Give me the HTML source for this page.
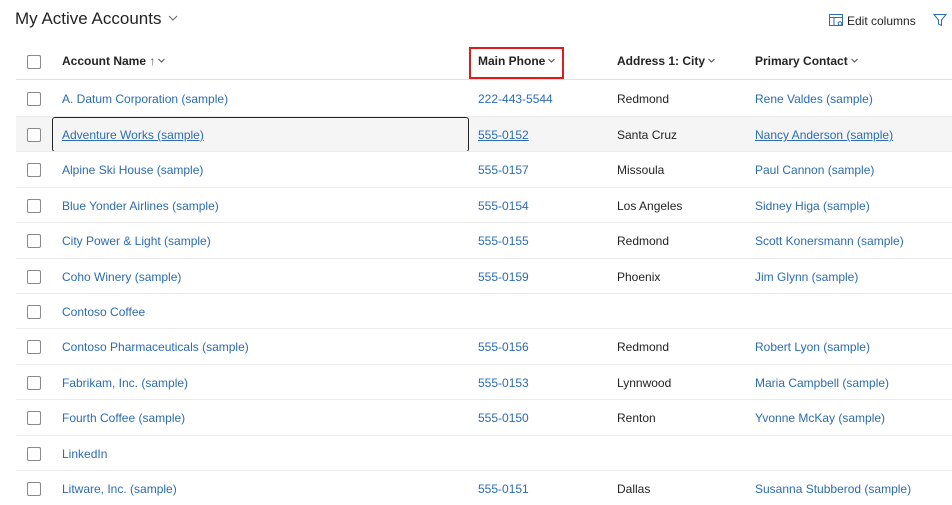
<!DOCTYPE html>
<html><head><meta charset="utf-8"><style>
*{margin:0;padding:0;box-sizing:border-box}
body{width:952px;height:502px;overflow:hidden;background:#fff;font-family:"Segoe UI","Liberation Sans",sans-serif;font-size:12px;color:#242424;position:relative}
.a{position:absolute;white-space:nowrap}
.title{left:15px;top:9px;font-size:17px;color:#242424}
.hdr{font-weight:bold;font-size:12px;color:#242424;top:54px}
.row{position:absolute;left:16px;width:936px;height:35px;border-top:1px solid #ebebeb}
.cb{position:absolute;left:11px;top:11px;width:14px;height:14px;border:1px solid #8a8a8a;border-radius:2px;background:#fff}
.c{position:absolute;top:11px;white-space:nowrap}
.l{color:#2b6cb3}
.u{text-decoration:underline}
.ch{display:inline-block;vertical-align:2px;margin-left:3px}
</style></head><body>
<div class="a title">My Active Accounts <svg class="ch" width="10" height="6" viewBox="0 0 10 6" style="margin-left:2px;vertical-align:3px"><path d="M1 1L5 5L9 1" fill="none" stroke="#666" stroke-width="1"/></svg></div>
<div class="a" style="left:829px;top:14px;color:#242424;font-size:12px">
<svg width="14" height="13" viewBox="0 0 14 13" style="vertical-align:-2px;margin-right:4px"><rect x="0.5" y="0.5" width="13" height="11" fill="none" stroke="#2b6cb3"/><line x1="0.5" y1="3.5" x2="13.5" y2="3.5" stroke="#2b6cb3"/><line x1="5" y1="3.5" x2="5" y2="11.5" stroke="#2b6cb3"/><circle cx="11" cy="9.5" r="1.8" fill="#fff" stroke="#2b6cb3"/></svg>Edit columns</div>
<svg class="a" style="left:933px;top:13px" width="14" height="14" viewBox="0 0 14 14"><path d="M1 1.5H13L8.5 7V12.5L5.5 11V7Z" fill="none" stroke="#2b6cb3"/></svg>
<div class="a" style="left:16px;top:44px;width:936px;height:36px;border-bottom:1px solid #e0e0e0"></div>
<div class="a" style="left:27px;top:55px;width:14px;height:14px;border:1px solid #8a8a8a;border-radius:2px"></div>
<div class="a hdr" style="left:62px">Account Name <span style="font-weight:normal;color:#555">↑</span><svg class="ch" width="7" height="5" viewBox="0 0 7 5"><path d="M0.5 1L3.5 4L6.5 1" fill="none" stroke="#555"/></svg></div>
<div class="a hdr" style="left:478px">Main Phone<svg class="ch" width="7" height="5" viewBox="0 0 7 5"><path d="M0.5 1L3.5 4L6.5 1" fill="none" stroke="#555"/></svg></div>
<div class="a" style="left:469px;top:47px;width:95px;height:32px;border:2px solid #e01b1b"></div>
<div class="a hdr" style="left:617px">Address 1: City<svg class="ch" width="7" height="5" viewBox="0 0 7 5"><path d="M0.5 1L3.5 4L6.5 1" fill="none" stroke="#555"/></svg></div>
<div class="a hdr" style="left:755px">Primary Contact<svg class="ch" width="7" height="5" viewBox="0 0 7 5"><path d="M0.5 1L3.5 4L6.5 1" fill="none" stroke="#555"/></svg></div>

<div class="row" style="top:81px;border-top:none"><div class="cb"></div><span class="c l" style="left:46px">A. Datum Corporation (sample)</span><span class="c l" style="left:462px">222-443-5544</span><span class="c" style="left:601px">Redmond</span><span class="c l" style="left:739px">Rene Valdes (sample)</span></div>
<div class="row" style="top:116px;background:#f5f5f5"><div class="cb"></div><span class="c l u" style="left:46px">Adventure Works (sample)</span><span class="c l u" style="left:462px">555-0152</span><span class="c" style="left:601px">Santa Cruz</span><span class="c l u" style="left:739px">Nancy Anderson (sample)</span></div>
<div class="a" style="left:52px;top:117px;width:417px;height:35px;border:1.5px solid #222;border-radius:3px"></div>
<div class="row" style="top:151px"><div class="cb"></div><span class="c l" style="left:46px">Alpine Ski House (sample)</span><span class="c l" style="left:462px">555-0157</span><span class="c" style="left:601px">Missoula</span><span class="c l" style="left:739px">Paul Cannon (sample)</span></div>
<div class="row" style="top:187px"><div class="cb"></div><span class="c l" style="left:46px">Blue Yonder Airlines (sample)</span><span class="c l" style="left:462px">555-0154</span><span class="c" style="left:601px">Los Angeles</span><span class="c l" style="left:739px">Sidney Higa (sample)</span></div>
<div class="row" style="top:222px"><div class="cb"></div><span class="c l" style="left:46px">City Power &amp; Light (sample)</span><span class="c l" style="left:462px">555-0155</span><span class="c" style="left:601px">Redmond</span><span class="c l" style="left:739px">Scott Konersmann (sample)</span></div>
<div class="row" style="top:258px"><div class="cb"></div><span class="c l" style="left:46px">Coho Winery (sample)</span><span class="c l" style="left:462px">555-0159</span><span class="c" style="left:601px">Phoenix</span><span class="c l" style="left:739px">Jim Glynn (sample)</span></div>
<div class="row" style="top:293px"><div class="cb"></div><span class="c l" style="left:46px">Contoso Coffee</span></div>
<div class="row" style="top:328px"><div class="cb"></div><span class="c l" style="left:46px">Contoso Pharmaceuticals (sample)</span><span class="c l" style="left:462px">555-0156</span><span class="c" style="left:601px">Redmond</span><span class="c l" style="left:739px">Robert Lyon (sample)</span></div>
<div class="row" style="top:364px"><div class="cb"></div><span class="c l" style="left:46px">Fabrikam, Inc. (sample)</span><span class="c l" style="left:462px">555-0153</span><span class="c" style="left:601px">Lynnwood</span><span class="c l" style="left:739px">Maria Campbell (sample)</span></div>
<div class="row" style="top:399px"><div class="cb"></div><span class="c l" style="left:46px">Fourth Coffee (sample)</span><span class="c l" style="left:462px">555-0150</span><span class="c" style="left:601px">Renton</span><span class="c l" style="left:739px">Yvonne McKay (sample)</span></div>
<div class="row" style="top:435px"><div class="cb"></div><span class="c l" style="left:46px">LinkedIn</span></div>
<div class="row" style="top:470px"><div class="cb"></div><span class="c l" style="left:46px">Litware, Inc. (sample)</span><span class="c l" style="left:462px">555-0151</span><span class="c" style="left:601px">Dallas</span><span class="c l" style="left:739px">Susanna Stubberod (sample)</span></div>
</body></html>
